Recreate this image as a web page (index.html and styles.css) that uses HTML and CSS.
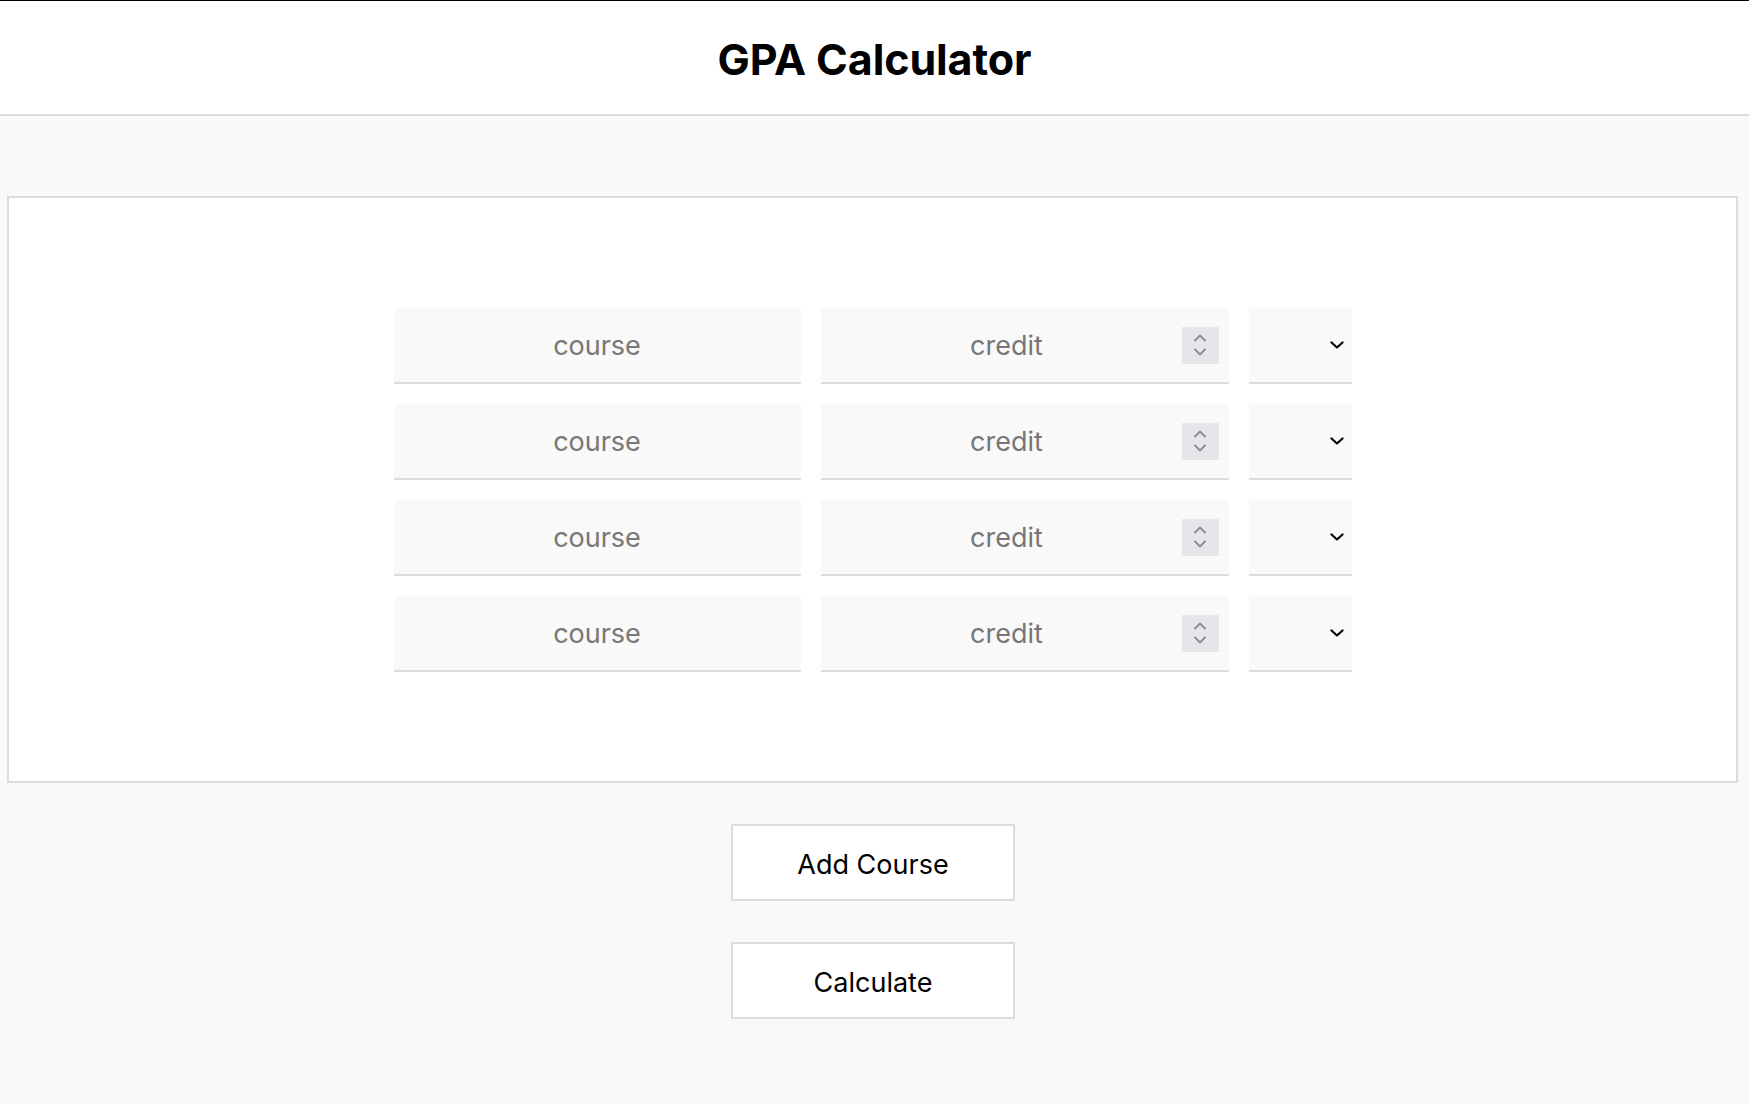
FILE: index.html
```html
<!DOCTYPE html>
<html lang="en">
<head>
<meta charset="utf-8">
<title>GPA Calculator</title>
<link rel="stylesheet" href="styles.css">
</head>
<body>
<header class="topbar">
  <h1 class="title">GPA Calculator</h1>
</header>
<main class="main">
  <section class="card">
    <div class="rows">
      <div class="row">
        <input class="field course" type="text" placeholder="course">
        <div class="field credit"><input class="credit-input" type="text" placeholder="credit"><span class="spin"><svg width="14" height="26" viewBox="0 0 14 26"><path d="M2 8.5 L7 3.5 L12 8.5" fill="none" stroke="#8e8e9a" stroke-width="2" stroke-linecap="round" stroke-linejoin="round"/><path d="M2 17.5 L7 22.5 L12 17.5" fill="none" stroke="#8e8e9a" stroke-width="2" stroke-linecap="round" stroke-linejoin="round"/></svg></span></div>
        <div class="field grade"><svg width="14" height="8" viewBox="0 0 14 8"><path d="M1.5 1.5 L7 6.5 L12.5 1.5" fill="none" stroke="#000" stroke-width="2.2" stroke-linecap="round" stroke-linejoin="round"/></svg></div>
      </div>
      <div class="row">
        <input class="field course" type="text" placeholder="course">
        <div class="field credit"><input class="credit-input" type="text" placeholder="credit"><span class="spin"><svg width="14" height="26" viewBox="0 0 14 26"><path d="M2 8.5 L7 3.5 L12 8.5" fill="none" stroke="#8e8e9a" stroke-width="2" stroke-linecap="round" stroke-linejoin="round"/><path d="M2 17.5 L7 22.5 L12 17.5" fill="none" stroke="#8e8e9a" stroke-width="2" stroke-linecap="round" stroke-linejoin="round"/></svg></span></div>
        <div class="field grade"><svg width="14" height="8" viewBox="0 0 14 8"><path d="M1.5 1.5 L7 6.5 L12.5 1.5" fill="none" stroke="#000" stroke-width="2.2" stroke-linecap="round" stroke-linejoin="round"/></svg></div>
      </div>
      <div class="row">
        <input class="field course" type="text" placeholder="course">
        <div class="field credit"><input class="credit-input" type="text" placeholder="credit"><span class="spin"><svg width="14" height="26" viewBox="0 0 14 26"><path d="M2 8.5 L7 3.5 L12 8.5" fill="none" stroke="#8e8e9a" stroke-width="2" stroke-linecap="round" stroke-linejoin="round"/><path d="M2 17.5 L7 22.5 L12 17.5" fill="none" stroke="#8e8e9a" stroke-width="2" stroke-linecap="round" stroke-linejoin="round"/></svg></span></div>
        <div class="field grade"><svg width="14" height="8" viewBox="0 0 14 8"><path d="M1.5 1.5 L7 6.5 L12.5 1.5" fill="none" stroke="#000" stroke-width="2.2" stroke-linecap="round" stroke-linejoin="round"/></svg></div>
      </div>
      <div class="row">
        <input class="field course" type="text" placeholder="course">
        <div class="field credit"><input class="credit-input" type="text" placeholder="credit"><span class="spin"><svg width="14" height="26" viewBox="0 0 14 26"><path d="M2 8.5 L7 3.5 L12 8.5" fill="none" stroke="#8e8e9a" stroke-width="2" stroke-linecap="round" stroke-linejoin="round"/><path d="M2 17.5 L7 22.5 L12 17.5" fill="none" stroke="#8e8e9a" stroke-width="2" stroke-linecap="round" stroke-linejoin="round"/></svg></span></div>
        <div class="field grade"><svg width="14" height="8" viewBox="0 0 14 8"><path d="M1.5 1.5 L7 6.5 L12.5 1.5" fill="none" stroke="#000" stroke-width="2.2" stroke-linecap="round" stroke-linejoin="round"/></svg></div>
      </div>
    </div>
  </section>
  <div class="actions">
    <button class="btn" type="button">Add Course</button>
    <button class="btn" type="button">Calculate</button>
  </div>
</main>
</body>
</html>
```
FILE: styles.css
```css
* { box-sizing: border-box; }
html, body { height: 100%; }
body {
  margin: 0;
  background: #f9f9f9;
  border-top: 1px solid #000;
  font-family: Inter, "Liberation Sans", sans-serif;
  color: #000;
}
.topbar {
  height: 115px;
  background: #fff;
  border-bottom: 2px solid #dcdcdc;
  display: flex;
  align-items: center;
  justify-content: center;
}
.title {
  margin: 0;
  font-size: 43px;
  font-weight: 700;
  letter-spacing: -0.1px;
  padding-top: 2px;
}
.main {
  padding-top: 80px;
}
.card {
  margin: 0 11px 0 7px;
  background: #fff;
  border: 2px solid #dcdcdc;
  padding: 110px 0 109px;
}
.rows {
  display: flex;
  flex-direction: column;
  align-items: center;
  gap: 20px;
}
.row {
  display: flex;
  gap: 20px;
}
.field {
  height: 76px;
  background: #f9f9f9;
  border: 0;
  border-bottom: 2px solid #dcdcdc;
  font-family: Inter, "Liberation Sans", sans-serif;
  font-size: 27px;
  color: #222;
  outline: none;
  margin: 0;
}
.field::placeholder, .credit-input::placeholder { color: #777; }
.course {
  width: 407px;
  text-align: center;
  padding: 1px 0 0;
}
.credit {
  width: 408px;
  display: flex;
  align-items: center;
  padding: 0 10px 0 11px;
}
.credit-input {
  flex: 1;
  min-width: 0;
  border: 0;
  background: transparent;
  font-family: inherit;
  font-size: 27px;
  text-align: center;
  outline: none;
  padding: 1px 0 0;
}
.spin {
  width: 37px;
  height: 37px;
  background: #e7e7eb;
  display: flex;
  align-items: center;
  justify-content: center;
}
.grade {
  width: 103px;
  display: flex;
  align-items: center;
  justify-content: flex-end;
  padding: 0 8px 0 0;
}
.actions {
  display: flex;
  flex-direction: column;
  align-items: center;
  gap: 41px;
  padding: 41px 3px 0 0;
}
.btn {
  width: 284px;
  height: 77px;
  background: #fff;
  border: 2px solid #dcdcdc;
  font-family: Inter, "Liberation Sans", sans-serif;
  font-size: 27px;
  color: #000;
  padding: 3px 0 0;
}
```
